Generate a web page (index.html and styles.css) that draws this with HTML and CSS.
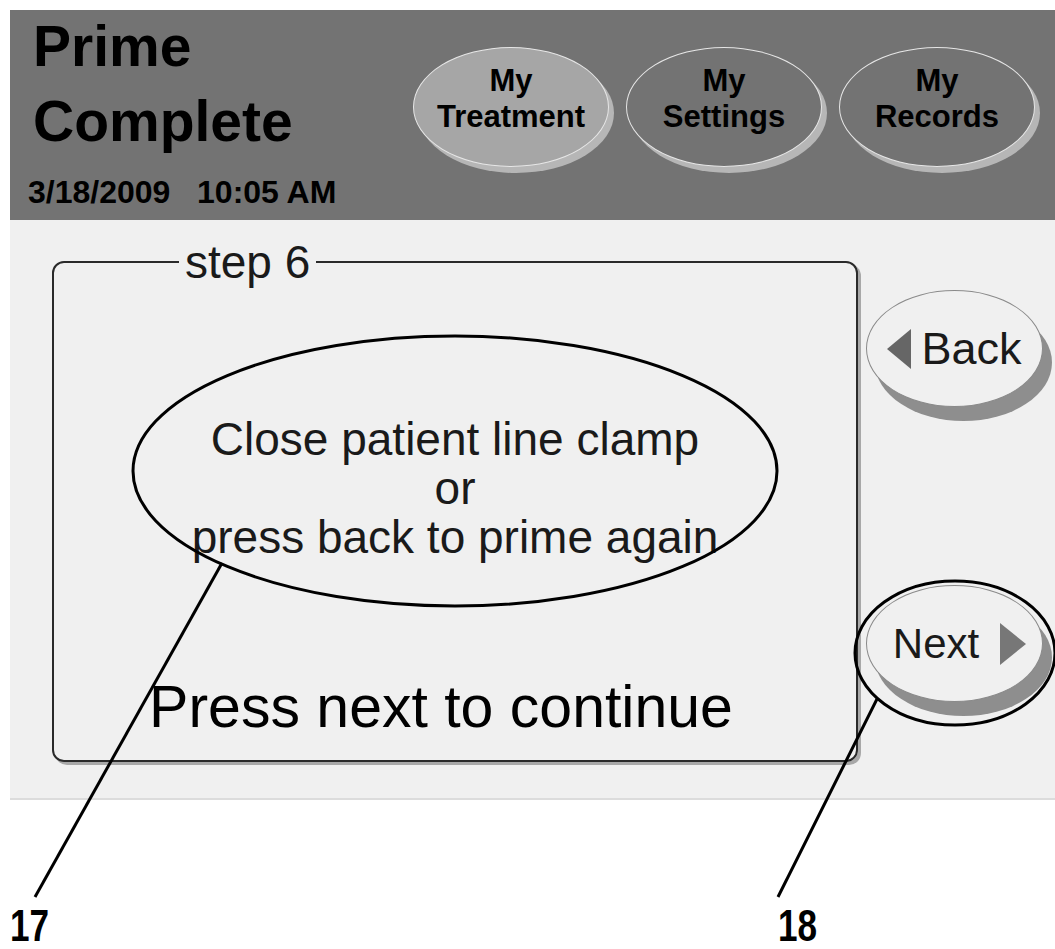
FILE: index.html
```html
<!DOCTYPE html>
<html lang="en">
<head>
    <meta charset="UTF-8">
    <meta name="viewport" content="width=device-width, initial-scale=1.0">
    <title>Prime Complete</title>
    <link rel="stylesheet" href="styles.css">
</head>
<body>
    <div class="screen">
        <!-- top bar: status on the left, main tabs on the right -->
        <header class="topbar">
            <div class="status">
                <h1 class="title">Prime<br>Complete</h1>
                <div class="clock">3/18/2009&nbsp;&nbsp;&nbsp;10:05 AM</div>
            </div>
            <nav class="tabs">
                <button class="tab active">My<br>Treatment</button>
                <button class="tab">My<br>Settings</button>
                <button class="tab">My<br>Records</button>
            </nav>
        </header>

        <main class="panel">
            <fieldset class="step">
                <legend>step 6</legend>
                <div class="instructions">
                    <p>Close patient line clamp</p>
                    <p>or</p>
                    <p>press back to prime again</p>
                </div>
                <p class="continue">Press next to continue</p>
            </fieldset>

            <div class="side">
                <button class="pill"><span class="tri tri-left"></span>Back</button>
                <button class="pill pill-next">Next<span class="tri tri-right"></span></button>
            </div>
        </main>
    </div>

    <!-- reference numerals for the figure -->
    <footer class="callouts">
        <span class="ref">17</span>
        <span class="ref">18</span>
    </footer>

    <!-- callout rings and leader lines drawn over the screen -->
    <svg class="annot" width="1055" height="949" viewBox="0 0 1055 949">
        <g fill="none" stroke="#000" stroke-width="3">
            <ellipse cx="455" cy="471" rx="322" ry="135"/>
            <ellipse cx="955" cy="653" rx="100" ry="72"/>
            <line x1="222" y1="563" x2="35" y2="897"/>
            <line x1="877" y1="699" x2="778" y2="897"/>
        </g>
    </svg>
</body>
</html>
```

FILE: styles.css
```css
body {
    margin: 0;
    background-color: #fff;
    font-family: "Liberation Sans", Arial, sans-serif;
    color: #111;
    position: relative;
    overflow: hidden;
}
.screen {
    margin: 10px 0 0 10px;
    width: 1045px;
}
.topbar {
    display: flex;
    height: 210px;
    background-color: #737373;
}
.status {
    width: 403px;
    padding-left: 23px;
    box-sizing: border-box;
}
.title {
    margin: -1px 0 0;
    font-size: 57px;
    line-height: 75px;
    font-weight: bold;
    color: #000;
}
.clock {
    margin-top: 13px;
    margin-left: -5px;
    font-size: 32px;
    line-height: 40px;
    font-weight: bold;
    color: #000;
    white-space: nowrap;
}
.tabs {
    display: flex;
    gap: 17px;
    padding-top: 37px;
}
.tab {
    width: 196px;
    height: 120px;
    padding: 0 0 16px;
    border: 1px solid #e6e6e6;
    border-radius: 50%;
    background-color: #737373;
    box-shadow: 5px 6px 0 #b6b6b6;
    font-family: inherit;
    font-size: 31px;
    line-height: 36px;
    font-weight: bold;
    color: #000;
}
.tab.active {
    background-color: #a6a6a6;
}
.panel {
    display: flex;
    height: 580px;
    padding: 19px 0 0 42px;
    box-sizing: border-box;
    background-color: #f0f0f0;
    border-bottom: 2px solid #dcdcdc;
}
.step {
    display: flex;
    flex-direction: column;
    align-items: center;
    width: 806px;
    height: 523px;
    box-sizing: border-box;
    margin: 0;
    padding: 0;
    min-width: 0;
    border: 2px solid #2a2a2a;
    border-radius: 12px;
    box-shadow: 3px 3px 0 #a8a8a8;
}
.step legend {
    margin-left: 125px;
    padding: 0 6px;
    font-size: 46px;
    line-height: 46px;
    color: #1a1a1a;
}
.instructions {
    margin-top: 130px;
    text-align: center;
    font-size: 46px;
    line-height: 49px;
    color: #1a1a1a;
}
.instructions p {
    margin: 0;
}
.continue {
    margin: 112px 28px 0 0;
    font-size: 59px;
    line-height: 67px;
    color: #000;
}
.side {
    display: flex;
    flex-direction: column;
    gap: 178px;
    padding: 51px 0 0 8px;
}
.pill {
    display: flex;
    align-items: center;
    justify-content: center;
    gap: 10px;
    width: 177px;
    height: 117px;
    padding: 0;
    border: 1px solid #8a8a8a;
    border-radius: 50%;
    background-color: #f0f0f0;
    box-shadow: 9px 14px 0 #8e8e8e;
    font-family: inherit;
    font-size: 45px;
    color: #1a1a1a;
}
.pill-next {
    gap: 21px;
    padding-left: 10px;
    font-size: 42px;
}
.tri {
    width: 0;
    height: 0;
    border-top: 20px solid transparent;
    border-bottom: 20px solid transparent;
}
.tri-left {
    border-right: 24px solid #666;
}
.tri-right {
    border-left: 26px solid #777;
    border-top-width: 21px;
    border-bottom-width: 21px;
}
.callouts {
    display: grid;
    grid-template-columns: 768px auto;
    height: 149px;
    padding: 106px 0 0 10px;
    box-sizing: border-box;
}
.ref {
    display: inline-block;
    font-size: 45px;
    line-height: 40px;
    font-weight: bold;
    color: #000;
    transform: scaleX(0.78);
    transform-origin: left;
}
.annot {
    position: absolute;
    top: 0;
    left: 0;
    pointer-events: none;
}
```
